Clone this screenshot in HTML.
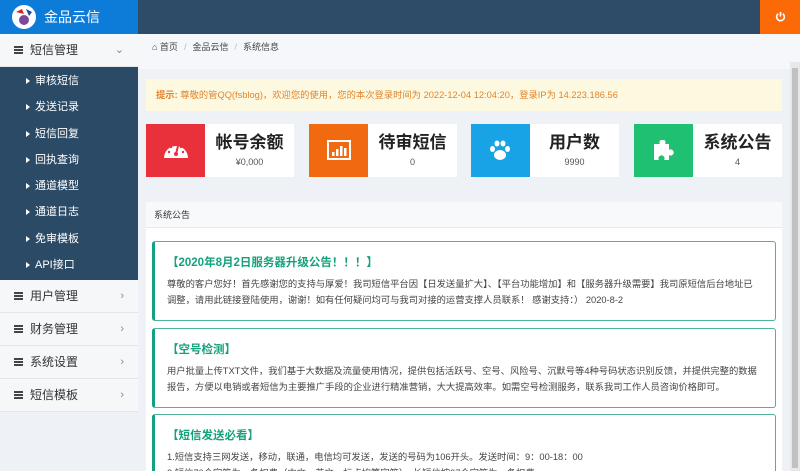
<!DOCTYPE html>
<html><head><meta charset="utf-8"><style>
*{margin:0;padding:0;box-sizing:border-box}
html{width:800px;height:471px;overflow:hidden}
body{width:800px;height:471px;overflow:hidden;background:#eef1f5;font-family:"Liberation Sans","Noto Sans CJK SC",sans-serif;position:relative;color:#333}
.abs{position:absolute}
.logo{left:0;top:0;width:138px;height:34px;background:#0d7cd8;color:#fff;font-size:14px;line-height:34px}
.top{left:138px;top:0;width:622px;height:34px;background:#2e4b68}
.pw{left:760px;top:0;width:40px;height:34px;background:#fb6a07}
.side{left:0;top:34px;width:138px;height:437px;background:#eef1f5;overflow:hidden}
.mi{height:33px;line-height:33px;font-size:12px;color:#333;background:#f6f7f9;border-bottom:1px solid #e2e5ea;position:relative;padding-left:30px}
.mi .h{position:absolute;left:14px;top:12px;width:9px;height:8px;border-top:2px solid #444;border-bottom:2px solid #444}
.mi .h:after{content:"";position:absolute;left:0;top:1px;width:9px;height:2px;background:#444}
.mi .a{position:absolute;right:14px;top:0;color:#888;font-size:11px}
.sub{background:#2b4a66;padding:1px 0 2px}
.sub div{height:26.3px;line-height:26px;color:#fff;font-size:11px;padding-left:26px;position:relative}
.sub div:before{content:"";position:absolute;left:26px;top:10px;border-left:4px solid #fff;border-top:3px solid transparent;border-bottom:3px solid transparent}
.sub div span{margin-left:9px}
.bc{left:138px;top:34px;width:662px;height:35px;background:#f5f7fa;font-size:9px;line-height:27px;padding-left:14px;color:#444}
.bc i{color:#bbb;margin:0 6px;font-style:normal}
.alert{left:146px;top:79px;width:636px;height:32px;background:#fdf8e0;color:#e0862e;font-size:9.3px;line-height:32px;padding-left:10px}
.card{top:124px;width:148px;height:53px;background:#fff}
.card .ic{position:absolute;left:0;top:0;width:59px;height:53px}
.card .t{position:absolute;left:59px;right:0;top:8px;text-align:center;font-size:17px;font-weight:bold;color:#222;line-height:22px}
.card .v{position:absolute;left:59px;right:0;top:33px;text-align:center;font-size:9px;color:#555}
.panel{left:146px;top:202px;width:636px;height:269px;background:#fff;overflow:hidden}
.ph{height:26px;background:#f8f9fa;border-bottom:1px solid #e8e8e8;font-size:9px;line-height:26px;padding-left:8px;color:#333}
.nb{position:absolute;left:6px;width:624px;border:1px solid #4fb39a;border-left:3px solid #14a083;border-radius:3px;padding:12px 14px 0 12px}
.nb h3{color:#16a17d;font-size:11.5px;font-weight:bold;margin-bottom:6px}
.nb p{font-size:9.3px;line-height:16px;color:#444}
.scroll{left:790px;top:62px;width:10px;height:409px;background:#e8e8e8}
.scroll div{position:absolute;left:2px;top:6px;width:6px;height:400px;background:#c1c1c1}
</style></head><body>
<div class="abs logo"><svg style="position:absolute;left:12px;top:5px" width="24" height="24" viewBox="0 0 24 24"><circle cx="12" cy="12" r="12" fill="#fff"/><circle cx="12" cy="15" r="5" fill="#7d4a9a"/><path d="M4 7l6-3 2 5z" fill="#d9232a"/><path d="M14 4l6 3-3 4z" fill="#1a4f9a"/></svg><span style="position:absolute;left:44px;top:0">金品云信</span></div>
<div class="abs top"></div>
<div class="abs pw"><svg style="position:absolute;left:15px;top:11px" width="11" height="11" viewBox="0 0 12 12"><path d="M3.5 3a4.2 4.2 0 1 0 5 0" fill="none" stroke="#fff" stroke-width="1.8"/><path d="M6 1v5" stroke="#fff" stroke-width="1.8"/></svg></div>
<div class="abs side">
<div class="mi"><span class="h"></span>短信管理<span class="a">⌄</span></div>
<div class="sub"><div><span>审核短信</span></div><div><span>发送记录</span></div><div><span>短信回复</span></div><div><span>回执查询</span></div><div><span>通道模型</span></div><div><span>通道日志</span></div><div><span>免审模板</span></div><div><span>API接口</span></div></div>
<div class="mi"><span class="h"></span>用户管理<span class="a">›</span></div>
<div class="mi"><span class="h"></span>财务管理<span class="a">›</span></div>
<div class="mi"><span class="h"></span>系统设置<span class="a">›</span></div>
<div class="mi"><span class="h"></span>短信模板<span class="a">›</span></div>
</div>
<div class="abs bc">⌂ 首页<i>/</i>金品云信<i>/</i>系统信息</div>
<div class="abs alert"><b>提示:</b> 尊敬的管QQ(fsblog)，欢迎您的使用，您的本次登录时间为 2022-12-04 12:04:20，登录IP为 14.223.186.56</div>
<div class="abs card" style="left:146px"><div class="ic" style="background:#e8313a"><svg style="position:absolute;left:17px;top:16px" width="26" height="20" viewBox="0 0 26 20"><path d="M1 18a12 12 0 0 1 24 0z" fill="#fff"/><circle cx="13" cy="14" r="2" fill="#e8313a"/><path d="M13 14l2-8" stroke="#e8313a" stroke-width="2"/><circle cx="6" cy="12" r="1.2" fill="#e8313a"/><circle cx="8" cy="7" r="1.2" fill="#e8313a"/><circle cx="18" cy="7" r="1.2" fill="#e8313a"/><circle cx="20" cy="12" r="1.2" fill="#e8313a"/></svg></div><div class="t">帐号余额</div><div class="v">¥0,000</div></div>
<div class="abs card" style="left:309px"><div class="ic" style="background:#f26a10"><svg style="position:absolute;left:18px;top:16px" width="24" height="20" viewBox="0 0 24 20"><rect x="1" y="1" width="22" height="18" fill="none" stroke="#fff" stroke-width="2"/><rect x="5" y="12" width="2.5" height="4" fill="#fff"/><rect x="9" y="9" width="2.5" height="7" fill="#fff"/><rect x="13" y="6" width="2.5" height="10" fill="#fff"/><rect x="17" y="8" width="2.5" height="8" fill="#fff"/></svg></div><div class="t">待审短信</div><div class="v">0</div></div>
<div class="abs card" style="left:471px"><div class="ic" style="background:#18a3e6"><svg style="position:absolute;left:18px;top:15px" width="22" height="22" viewBox="0 0 22 22"><ellipse cx="11" cy="16" rx="6" ry="5" fill="#fff"/><ellipse cx="3.5" cy="10" rx="2.5" ry="3" fill="#fff"/><ellipse cx="18.5" cy="10" rx="2.5" ry="3" fill="#fff"/><ellipse cx="8" cy="4.5" rx="2.5" ry="3" fill="#fff"/><ellipse cx="14" cy="4.5" rx="2.5" ry="3" fill="#fff"/></svg></div><div class="t">用户数</div><div class="v">9990</div></div>
<div class="abs card" style="left:634px"><div class="ic" style="background:#1fc072"><svg style="position:absolute;left:18px;top:16px" width="24" height="22" viewBox="0 0 24 22"><path d="M2 4h6a3 3 0 1 1 5 0h4v6a3 3 0 1 1 0 5v5h-5a3 3 0 1 0-5 0H2z" fill="#fff"/></svg></div><div class="t">系统公告</div><div class="v">4</div></div>
<div class="abs panel"><div class="ph">系统公告</div>
<div class="nb" style="top:39px;height:80px"><h3>【2020年8月2日服务器升级公告！！！】</h3><p>尊敬的客户您好！首先感谢您的支持与厚爱！我司短信平台因【日发送量扩大】、【平台功能增加】和【服务器升级需要】我司原短信后台地址已调整，请用此链接登陆使用，谢谢！如有任何疑问均可与我司对接的运营支撑人员联系！ 感谢支持：） 2020-8-2</p></div>
<div class="nb" style="top:126px;height:80px"><h3>【空号检测】</h3><p>用户批量上传TXT文件，我们基于大数据及流量使用情况，提供包括活跃号、空号、风险号、沉默号等4种号码状态识别反馈，并提供完整的数据报告，方便以电销或者短信为主要推广手段的企业进行精准营销，大大提高效率。如需空号检测服务，联系我司工作人员咨询价格即可。</p></div>
<div class="nb" style="top:212px;height:80px"><h3>【短信发送必看】</h3><p>1.短信支持三网发送，移动，联通，电信均可发送，发送的号码为106开头。发送时间：9：00-18：00<br>2.短信70个字符为一条扣费（中文、英文、标点均算字符），长短信按67个字符为一条扣费</p></div>
</div>
<div class="abs scroll"><div></div></div>
</body></html>
